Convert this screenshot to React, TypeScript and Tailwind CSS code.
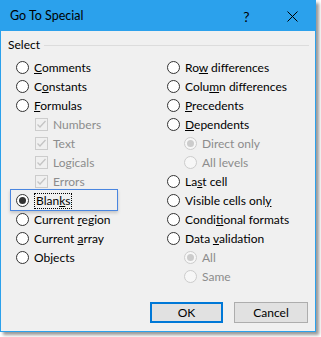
import type { ReactNode } from 'react';

type Item = {
    label: ReactNode;
    kind: 'radio' | 'check';
    checked?: boolean;
    disabled?: boolean;
    indent?: boolean;
    focus?: boolean;
};

const Radio = ({ checked, disabled }: { checked?: boolean; disabled?: boolean }) => (
    <span
        className={`flex w-[13px] h-[13px] shrink-0 items-center justify-center rounded-full border ${
            disabled ? 'border-[#cccccc] bg-[#f7f7f7]' : 'border-[#333333] bg-white'
        }`}
    >
        {checked && (
            <span
                className={`block w-[7px] h-[7px] rounded-full ${
                    disabled ? 'bg-[#cccccc]' : 'bg-[#333333]'
                }`}
            />
        )}
    </span>
);

const Check = () => (
    <span className="flex w-[13px] h-[13px] shrink-0 items-center justify-center border border-[#cccccc] bg-[#f0f0f0]">
        <svg width="11" height="11" viewBox="0 0 11 11">
            <polyline
                points="1.5,5.5 4,8 9.5,2"
                fill="none"
                stroke="#c4c4c4"
                strokeWidth="1.3"
            />
        </svg>
    </span>
);

const Row = ({ item }: { item: Item }) => (
    <div
        className={`relative flex h-[19px] items-center gap-[5px] ${
            item.indent ? (item.kind === 'check' ? 'pl-[19px]' : 'pl-[17px]') : ''
        } ${item.disabled ? 'text-[#8c8c8c]' : 'text-black'}`}
    >
        {item.focus && (
            <div className="absolute left-[-6px] top-[-2px] w-[108px] h-[22px] border border-[#4a86e0] shadow-[0_2px_3px_rgba(0,0,0,0.18)]" />
        )}
        {item.kind === 'radio' ? (
            <Radio checked={item.checked} disabled={item.disabled} />
        ) : (
            <Check />
        )}
        <span
            className={
                item.focus
                    ? 'border border-dotted border-black px-[1px] leading-[14px]'
                    : 'leading-[14px]'
            }
        >
            {item.label}
        </span>
    </div>
);

const left: Item[] = [
    { kind: 'radio', label: <><u>C</u>omments</> },
    { kind: 'radio', label: <>C<u>o</u>nstants</> },
    { kind: 'radio', label: <><u>F</u>ormulas</> },
    { kind: 'check', label: 'Numbers', disabled: true, indent: true },
    { kind: 'check', label: 'Text', disabled: true, indent: true },
    { kind: 'check', label: 'Logicals', disabled: true, indent: true },
    { kind: 'check', label: 'Errors', disabled: true, indent: true },
    { kind: 'radio', label: <>Blan<u>k</u>s</>, checked: true, focus: true },
    { kind: 'radio', label: <>Current <u>r</u>egion</> },
    { kind: 'radio', label: <>Current <u>a</u>rray</> },
    { kind: 'radio', label: <>Ob<u>j</u>ects</> },
];

const right: Item[] = [
    { kind: 'radio', label: <>Ro<u>w</u> differences</> },
    { kind: 'radio', label: <>Colu<u>m</u>n differences</> },
    { kind: 'radio', label: <><u>P</u>recedents</> },
    { kind: 'radio', label: <><u>D</u>ependents</> },
    { kind: 'radio', label: 'Direct only', disabled: true, indent: true, checked: true },
    { kind: 'radio', label: 'All levels', disabled: true, indent: true },
    { kind: 'radio', label: <>La<u>s</u>t cell</> },
    { kind: 'radio', label: <>Visible cells onl<u>y</u></> },
    { kind: 'radio', label: <>Condi<u>t</u>ional formats</> },
    { kind: 'radio', label: <>Data <u>v</u>alidation</> },
    { kind: 'radio', label: 'All', disabled: true, indent: true, checked: true },
    { kind: 'radio', label: 'Same', disabled: true, indent: true },
];

const App = () => {
    return (
        <div className="w-[321px] h-[337px] bg-white font-['Lato','Liberation_Sans',sans-serif] text-[12px] text-black">
            <div className="flex flex-col w-[316px] h-[332px] border border-[#2ba1ec] bg-[#f0f0f0] shadow-[3px_3px_3px_rgba(0,0,0,0.4)]">
                <div className="flex h-[30px] shrink-0 items-center bg-[#2ba1ec] pl-[9px] text-[12.5px]">
                    <span className="flex-1">Go To Special</span>
                    <span className="w-[45px] text-center text-[14px]">?</span>
                    <span className="flex w-[46px] justify-center">
                        <svg width="11" height="11" viewBox="0 0 11 11">
                            <path d="M0.5 0.5 L10.5 10.5 M10.5 0.5 L0.5 10.5" stroke="#000" strokeWidth="1" />
                        </svg>
                    </span>
                </div>
                <div className="flex items-center gap-[4px] pl-[7px] pr-[6px] pt-[6px] h-[22px]">
                    <span>Select</span>
                    <span className="flex-1 h-px bg-[#dcdcdc]" />
                </div>
                <div className="flex pt-[5px] pl-[15px]">
                    <div className="w-[151px] flex flex-col">
                        {left.map((item, i) => (
                            <Row key={i} item={item} />
                        ))}
                    </div>
                    <div className="flex flex-col">
                        {right.map((item, i) => (
                            <Row key={i} item={item} />
                        ))}
                    </div>
                </div>
                <div className="mt-auto mb-[8px] flex justify-end gap-[11px] pr-[7px]">
                    <button className="w-[73px] h-[21px] border-2 border-[#0078d7] bg-[#e1e1e1]">OK</button>
                    <button className="w-[74px] h-[21px] border border-[#adadad] bg-[#e1e1e1]">Cancel</button>
                </div>
            </div>
        </div>
    );
};

export default App;
